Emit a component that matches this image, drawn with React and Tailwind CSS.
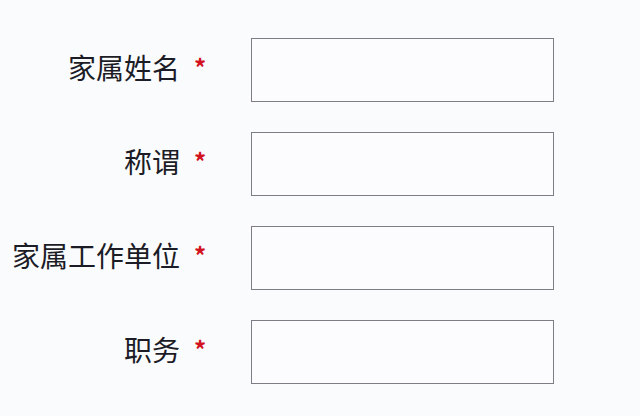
const FIELDS = ["家属姓名", "称谓", "家属工作单位", "职务"];

function Row({ label }) {
  return (
    <div className="flex items-center h-[63px]">
      <label className="w-[180px] text-right text-[28px] leading-none text-[#1c1c26] pb-[5px] whitespace-nowrap">
        {label}
      </label>
      <span className="w-[40px] text-center text-[24px] leading-none text-[#d2121c] font-bold pb-[6px]">*</span>
      <div className="ml-[31px] w-[303px] h-[64px] border border-[#7d7d88] bg-[#fcfcfe]" />
    </div>
  );
}

export default function App() {
  return (
    <div
      className="w-[640px] h-[416px] bg-[#fafbfd] pt-[38px] flex flex-col gap-[31px]"
      style={{ fontFamily: '"Noto Sans CJK SC", "Noto Sans", sans-serif' }}
    >
      {FIELDS.map((f) => (
        <Row key={f} label={f} />
      ))}
    </div>
  );
}
